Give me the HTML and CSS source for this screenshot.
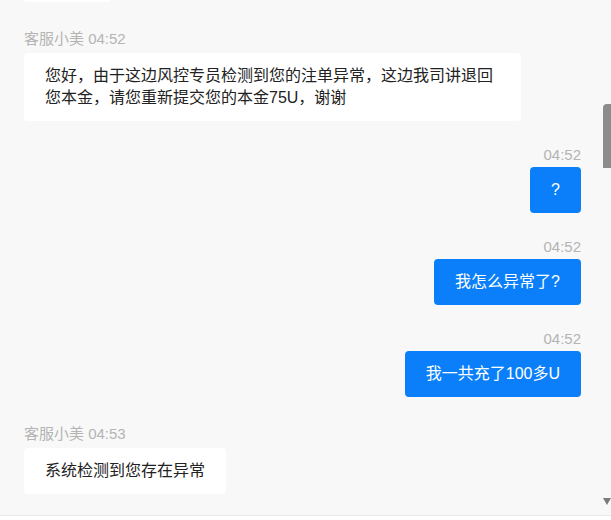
FILE: index.html
```html
<!DOCTYPE html>
<html lang="zh-CN">
<head>
    <meta charset="UTF-8">
    <meta name="viewport" content="width=device-width, initial-scale=1.0">
    <link rel="stylesheet" href="styles.css">
</head>
<body>
    <div class="chat-window">
        <div class="chat-list">
            <div class="bubble-edge"></div>

            <div class="msg msg-in">
                <div class="msg-meta">客服小美 04:52</div>
                <div class="msg-bubble">您好，由于这边风控专员检测到您的注单异常，这边我司讲退回您本金，请您重新提交您的本金75U，谢谢</div>
            </div>

            <div class="msg msg-out">
                <div class="msg-meta">04:52</div>
                <div class="msg-bubble">?</div>
            </div>

            <div class="msg msg-out">
                <div class="msg-meta">04:52</div>
                <div class="msg-bubble">我怎么异常了?</div>
            </div>

            <div class="msg msg-out">
                <div class="msg-meta">04:52</div>
                <div class="msg-bubble">我一共充了100多U</div>
            </div>

            <div class="msg msg-in">
                <div class="msg-meta">客服小美 04:53</div>
                <div class="msg-bubble">系统检测到您存在异常</div>
            </div>
        </div>

        <div class="scroll-track">
            <div class="scroll-thumb"></div>
            <div class="scroll-arrow"></div>
        </div>
    </div>
    <div class="chat-footer"></div>
</body>
</html>
```

FILE: styles.css
```css
body {
    margin: 0;
    background: #ffffff;
    font-family: "Liberation Sans", "Noto Sans CJK SC", sans-serif;
}
.chat-window {
    display: flex;
    height: 515px;
    background: #f8f8f8;
    overflow: hidden;
}
.chat-list {
    flex-grow: 1;
    display: flex;
    flex-direction: column;
    gap: 24px;
    padding: 0 22px 0 24px;
}
.bubble-edge {
    width: 86px;
    height: 2px;
    background: #ffffff;
    border-radius: 0 0 4px 4px;
}
.msg {
    display: flex;
    flex-direction: column;
}
.msg-in {
    align-items: flex-start;
}
.msg-out {
    align-items: flex-end;
}
.msg-meta {
    font-size: 15px;
    line-height: 20px;
    color: #b4b4b4;
    margin-bottom: 2px;
}
.msg-in .msg-meta {
    line-height: 26px;
    margin-bottom: 1px;
}
.msg-bubble {
    max-width: 455px;
    padding: 12px 21px;
    font-size: 16px;
    line-height: 22px;
    border-radius: 4px;
}
.msg-in .msg-bubble {
    background: #ffffff;
    color: #222222;
}
.msg-out .msg-bubble {
    background: #0b7ff9;
    color: #ffffff;
}
.scroll-track {
    width: 8px;
    display: flex;
    flex-direction: column;
}
.scroll-thumb {
    margin-top: 104px;
    height: 64px;
    background: #8c8c8c;
    border-radius: 4px 0 0 0;
}
.scroll-arrow {
    margin-top: auto;
    margin-bottom: 10px;
    width: 0;
    height: 0;
    border-left: 4px solid transparent;
    border-right: 4px solid transparent;
    border-top: 7px solid #7a7a7a;
}
.chat-footer {
    height: 1px;
    background: #e8e8e8;
}
```
